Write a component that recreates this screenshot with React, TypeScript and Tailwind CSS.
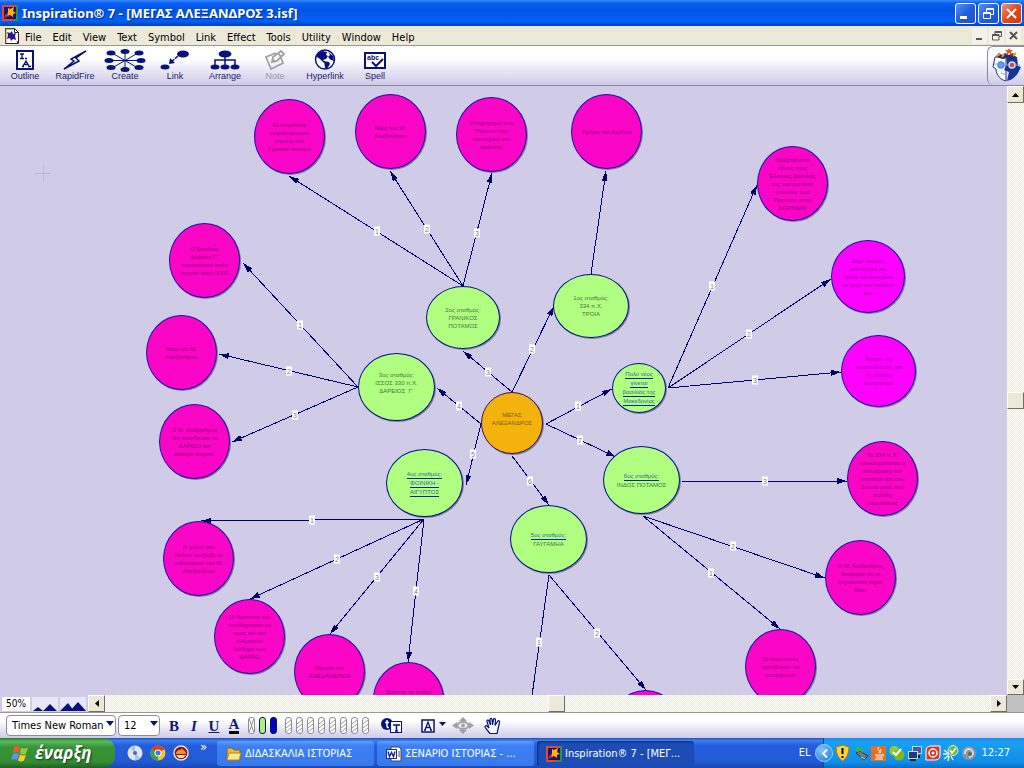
import { useState } from 'react'

const UI = "font-['DejaVu_Sans_Condensed','DejaVu_Sans','Noto_Sans',sans-serif]"
const TRACK = 'bg-[repeating-conic-gradient(#fff_0_25%,#ece9d8_0_50%)] bg-[length:2px_2px]'
const RAISED = 'bg-[#ece9d8] border border-t-white border-l-white border-r-[#716f64] border-b-[#716f64] flex items-center justify-center shrink-0'

const menus = ['File', 'Edit', 'View', 'Text', 'Symbol', 'Link', 'Effect', 'Tools', 'Utility', 'Window', 'Help']

type Node = { x: number; y: number; w: number; h: number; kind: string; lines: string[]; links?: number }

const PINK = { w: 71, h: 75, kind: 'pink' }

// positions are relative to the top left of the diagram canvas
const nodes: Node[] = [
  { ...PINK, x: 254, y: 13, lines: ['Οι σατράπες', 'συγκέντρωσαν', 'στρατό στο', 'Γρανικό ποταμό'] },
  { ...PINK, x: 355, y: 8, lines: ['Νίκη του Μ.', 'Αλεξάνδρου'] },
  { ...PINK, x: 456, y: 11, lines: ['Υποχώρηση των', 'Περσών στο', 'εσωτερικό του', 'κράτους'] },
  { ...PINK, x: 571, y: 8, lines: ['Τίμησε τον Αχιλλέα'] },
  { ...PINK, x: 757, y: 60, lines: ['Ορίζεται από', 'όλους τους', 'Έλληνες βασιλιάς', 'της εκστρατείας', 'εναντίον των', 'Περσών, στην', 'ΚΟΡΙΝΘΟ'] },
  { x: 831, y: 154, w: 74, h: 73, kind: 'magenta', lines: ['Είχε πολλές', 'ικανότητες και', 'ήθελε να συνεχίσει', 'το έργο του πατέρα', 'του'] },
  { x: 841, y: 249, w: 75, h: 72, kind: 'magenta', lines: ['Άρχισε τις', 'προετοιμασίες για', 'τη μεγάλη', 'εκστρατεία'] },
  { ...PINK, x: 847, y: 355, lines: ['Το 334 π.Χ.', 'ολοκληρώνεται η', 'επιστροφή του', 'στρατού του στα', 'Σούσα μετά από', 'πολλές', 'περιπέτειες'] },
  { ...PINK, x: 825, y: 454, lines: ['Ο Μ. Αλέξανδρος', 'θεώρησε ότι οι', 'στρατιώτες είχαν', 'δίκιο'] },
  { ...PINK, x: 745, y: 543, lines: ['Οι στρατιώτες', 'αρνήθηκαν να', 'συνεχίσουν'] },
  { ...PINK, x: 610, y: 604, lines: [] },
  { ...PINK, x: 373, y: 576, lines: ['Διέλυσε το στόλο', '', ''] },
  { ...PINK, x: 294, y: 548, lines: ['Ίδρυσε την', 'ΑΛΕΞΑΝΔΡΕΙΑ'] },
  { ...PINK, x: 214, y: 513, lines: ['Οι Αιγύπτιοι τον', 'υποδέχτηκαν με', 'τιμές και τον', 'ονόμασαν', 'διάδοχο των', 'ΦΑΡΑΩ'] },
  { ...PINK, x: 163, y: 435, lines: ['Η χώρα του', 'Νείλου τράβηξε το', 'ενδιαφέρον του Μ.', 'Αλεξάνδρου'] },
  { ...PINK, x: 159, y: 318, lines: ['Ο Μ. Αλέξανδρος', 'δεν καταδιώκει το', 'ΔΑΡΕΙΟ και', 'αλλάζει πορεία.'] },
  { ...PINK, x: 146, y: 229, lines: ['Νίκη του Μ.', 'Αλεξάνδρου'] },
  { ...PINK, x: 169, y: 137, lines: ['Ο βασιλιάς', 'Δαρείος Γ΄', 'παρατάσσει πολύ', 'στρατό στην ΙΣΣΟ'] },
  { x: 426, y: 200, w: 74, h: 63, kind: 'green', lines: ['2ος σταθμός:', 'ΓΡΑΝΙΚΟΣ', 'ΠΟΤΑΜΟΣ'] },
  { x: 553, y: 188, w: 76, h: 64, kind: 'green', lines: ['1ος σταθμός:', '334 π.Χ.', 'ΤΡΟΙΑ'] },
  { x: 612, y: 277, w: 54, h: 50, kind: 'green', lines: ['Πολύ νέος', 'γίνεται', 'βασιλιάς της', 'Μακεδονίας'], links: 4 },
  { x: 603, y: 360, w: 77, h: 68, kind: 'green', lines: ['6ος σταθμός:', 'ΙΝΔΟΣ ΠΟΤΑΜΟΣ'], links: 1 },
  { x: 510, y: 419, w: 77, h: 68, kind: 'green', lines: ['5ος σταθμός:', 'ΓΑΥΓΑΜΗΑ'], links: 1 },
  { x: 386, y: 363, w: 77, h: 68, kind: 'green', lines: ['4ος σταθμός:', 'ΦΟΙΝΙΚΗ -', 'ΑΙΓΥΠΤΟΣ'], links: 3 },
  { x: 358, y: 267, w: 77, h: 68, kind: 'green', lines: ['3ος σταθμός:', 'ΙΣΣΟΣ 330 π.Χ.', 'ΔΑΡΕΙΟΣ  Γ΄', ''] },
  { x: 481, y: 306, w: 62, h: 62, kind: 'orange', lines: ['ΜΕΓΑΣ', 'ΑΛΕΞΑΝΔΡΟΣ', ''] },
]

// x1, y1, x2, y2, label, label x, label y
const edges: [number, number, number, number, string, number, number][] = [
  [512, 306, 463, 265, '3', 488, 286],
  [512, 306, 554, 220, '2', 532, 263],
  [546, 338, 612, 303, '1', 578, 320],
  [546, 338, 616, 371, '7', 580, 354],
  [512, 370, 549, 419, '6', 530, 395],
  [481, 338, 437, 302, '4', 459, 320],
  [481, 338, 466, 399, '5', 473, 368],
  [463, 200, 289, 90, '1', 377, 145],
  [463, 200, 390, 85, '2', 427, 143],
  [463, 200, 492, 87, '3', 477, 147],
  [591, 188, 606, 85, '', 0, 0],
  [668, 302, 757, 99, '1', 712, 200],
  [668, 302, 831, 193, '2', 749, 248],
  [668, 302, 841, 286, '3', 755, 294],
  [682, 395, 847, 395, '3', 765, 395],
  [643, 430, 825, 492, '2', 733, 460],
  [643, 430, 780, 543, '1', 711, 487],
  [549, 489, 530, 624, '1', 539, 556],
  [549, 489, 646, 604, '2', 597, 547],
  [424, 433, 201, 435, '1', 312, 434],
  [424, 433, 250, 513, '2', 337, 473],
  [424, 433, 330, 548, '3', 377, 491],
  [424, 433, 408, 576, '4', 416, 505],
  [358, 301, 243, 177, '1', 300, 239],
  [358, 301, 219, 268, '2', 289, 285],
  [358, 301, 232, 356, '3', 295, 329],
]

const fills: Record<string, string> = {
  pink: 'bg-[#fb05c6] border-[#1c10a8] text-[#96057c]',
  magenta: 'bg-[#ff00ff] border-[#1c10a8] text-[#98109c]',
  green: 'bg-[#b0ff80] border-[#00108c] text-[#4a7440]',
  orange: 'bg-[#f3b20c] border-[#3c0a70] text-[#7a5c10]',
}

function Bubble({ node }: { node: Node }) {
  return (
    <div
      className={`absolute flex flex-col items-center justify-center rounded-[50%] border shadow-[1px_1px_0_#7c7a9c] text-[6px] leading-[8px] whitespace-pre font-['Liberation_Sans','Noto_Sans',sans-serif] ${fills[node.kind]}`}
      style={{ left: node.x, top: node.y, width: node.w, height: node.h }}
    >
      {node.lines.map((line, i) =>
        i < (node.links || 0) ? (
          <a key={i} href="#" className="text-[#2f6c9c] border-b border-[#0a2a9c]">{line}</a>
        ) : (
          <span key={i} className="min-h-[8px]">{line}</span>
        )
      )}
    </div>
  )
}

function Diagram() {
  return (
    <main className="relative flex-1 min-w-0 overflow-hidden bg-[#d0cce8]">
      <svg className="absolute inset-0 w-full h-full" shapeRendering="crispEdges">
        <defs>
          <marker id="head" markerWidth="11" markerHeight="6" refX="10" refY="3" orient="auto" markerUnits="userSpaceOnUse">
            <path d="M0 0L10 3L0 6z" fill="#000060" />
          </marker>
        </defs>
        <path d="M43 79v16M35 87h16" stroke="#bab8d0" />
        {edges.map((e, i) => (
          <line key={i} x1={e[0]} y1={e[1]} x2={e[2]} y2={e[3]} stroke="#000070" markerEnd="url(#head)" />
        ))}
      </svg>
      {edges.filter(e => e[4]).map((e, i) => (
        <span
          key={i}
          className="absolute w-[6px] h-[9px] -translate-x-1/2 -translate-y-1/2 bg-white text-center text-[7px] leading-[9px] text-[#808080] font-['Liberation_Sans',sans-serif]"
          style={{ left: e[5], top: e[6] }}
        >
          {e[4]}
        </span>
      ))}
      {nodes.map((n, i) => <Bubble key={i} node={n} />)}
    </main>
  )
}

function AppIcon() {
  return (
    <svg width="16" height="16" viewBox="0 0 16 16" className="shrink-0">
      <rect width="16" height="16" fill="#e8472c" />
      <path d="M14 0h2v16h-6z" fill="#2f8f4a" />
      <rect x="2" y="2" width="12" height="12" fill="#1c1070" />
      <path d="M6 3l2 1 4-2-1 4 3 2-3 1v3l-3-2-3 1 1-4z" fill="#ffb400" />
      <path d="M3 13c0-3 1-4 3-4M4 11h3" stroke="#e8472c" fill="none" />
    </svg>
  )
}

function Arrow({ dir }: { dir: 'up' | 'down' | 'left' | 'right' }) {
  const d = { up: 'M0 4h7L3.500 0z', down: 'M0 0h7L3.500 4z', left: 'M4 0v7L0 3.500z', right: 'M0 0v7l4-3.500z' }[dir]
  const tall = dir === 'left' || dir === 'right'
  return <svg width={tall ? 4 : 7} height={tall ? 7 : 4}><path d={d} fill="#000" /></svg>
}

function TitleBar() {
  const btn = 'w-[21px] h-[21px] rounded-[3px] border border-white flex items-center justify-center'
  const blue = 'bg-[linear-gradient(135deg,#5b8ff5,#2160e0_50%,#1a4fd0)]'
  return (
    <header className="h-[26px] shrink-0 flex items-center pl-[2px] pr-[2px] gap-1 bg-[linear-gradient(#3a8cff,#0a5ff2_12%,#0054e3_40%,#0060fa_80%,#0040c0)]">
      <AppIcon />
      <h1 className="flex-1 text-white text-[13px] leading-[20px] font-bold font-['Noto_Sans',sans-serif] [text-shadow:1px_1px_1px_#0a2a80] whitespace-nowrap">Inspiration® 7 - [ΜΕΓΑΣ ΑΛΕΞΑΝΔΡΟΣ 3.isf]</h1>
      <div className="flex gap-[2px]">
        <button aria-label="Minimize" className={`${btn} ${blue}`}>
          <svg width="13" height="13"><path d="M1 9h7v3H1z" fill="#fff" /></svg>
        </button>
        <button aria-label="Restore" className={`${btn} ${blue}`}>
          <svg width="13" height="13" fill="none" stroke="#fff"><path d="M4.500 5V1.500h7v6H9M4 2.500h8" /><path d="M1.500 5.500h7v6h-7zM1 6.500h8" /></svg>
        </button>
        <button aria-label="Close" className={`${btn} bg-[linear-gradient(135deg,#f0957a,#e04a20_50%,#c83c14)]`}>
          <svg width="13" height="13"><path d="M2 2l9 9M11 2l-9 9" stroke="#fff" strokeWidth="2" /></svg>
        </button>
      </div>
    </header>
  )
}

function MenuBar() {
  const btn = 'w-[15px] h-[16px] bg-[#f3f1e8] flex items-center justify-center'
  return (
    <nav className="h-5 shrink-0 flex items-center pl-[5px] pr-[3px] bg-[#ece9d8] border-b border-[#9c9a8c]">
      <svg width="14" height="16" viewBox="0 0 14 16">
        <path d="M.5.5h9l4 4v11H.5z" fill="#fff" stroke="#222" />
        <path d="M1 1v14" stroke="#d07a20" /><path d="M1 1h8" stroke="#2f9a4a" />
        <path d="M9.500.5v4h4M12 13l1 2" stroke="#222" fill="none" />
        <path d="M7 3l1 3 3-1-1 3 1 4-3-1-2 2-1-3-3 1 1-4-1-3 3 1z" fill="#2a1590" />
      </svg>
      <ul className="flex flex-1">
        {menus.map(m => (
          <li key={m}><button className="pl-[6px] pr-[5px] text-[11px] leading-[16px] text-black">{m}</button></li>
        ))}
      </ul>
      <div className="flex gap-[2px]">
        <button aria-label="Minimize document" className={btn}><svg width="9" height="9"><path d="M1 7h6v2H1z" fill="#555" /></svg></button>
        <button aria-label="Restore document" className={btn}>
          <svg width="10" height="10" fill="none" stroke="#555"><path d="M3 3V.5h6.500v5H7M3 1.500h6M.5 3.500H7v5.500H.5zM.5 4.500H7" /></svg>
        </button>
        <button aria-label="Close document" className={btn}><svg width="9" height="9"><path d="M1 1l7 7M8 1L1 8" stroke="#555" strokeWidth="2" /></svg></button>
      </div>
    </nav>
  )
}

const navy = '#08107c'

const tools = [
  {
    label: 'Outline',
    icon: (
      <svg width="18" height="20" viewBox="0 0 18 20" fill="none" stroke={navy}>
        <rect x="1" y="1" width="16" height="18" strokeWidth="2" fill="#fff" />
        <path d="M4 4h4M6 4v5M4 8.500h4M9 8.500h2" strokeWidth="1.300" />
        <path d="M7 16l3-5 3 5M8 14.500h4M6 16.500h2M12 16.500h3" strokeWidth="1.300" />
      </svg>
    ),
  },
  {
    label: 'RapidFire',
    icon: (
      <svg width="26" height="20" viewBox="0 0 26 20">
        <path d="M24 1L9 9l3 2L2 19l15-8-3-3z" fill="#fff" stroke={navy} strokeWidth="1.500" />
      </svg>
    ),
  },
  {
    label: 'Create',
    icon: (
      <svg width="42" height="23" viewBox="0 0 42 23" className="shrink-0">
        <path d="M21 3v17M5 11.500h32M8 4l26 15M34 4L8 19" stroke={navy} />
        <g fill={navy}>
          <ellipse cx="21" cy="2.500" rx="4.500" ry="2.500" /><ellipse cx="21" cy="20.500" rx="4.500" ry="2.500" />
          <ellipse cx="5" cy="11.500" rx="4.500" ry="2.500" /><ellipse cx="37" cy="11.500" rx="4.500" ry="2.500" />
          <ellipse cx="7" cy="4" rx="4.500" ry="2.500" /><ellipse cx="35" cy="4" rx="4.500" ry="2.500" />
          <ellipse cx="7" cy="18.500" rx="4.500" ry="2.500" /><ellipse cx="35" cy="18.500" rx="4.500" ry="2.500" />
        </g>
      </svg>
    ),
  },
  {
    label: 'Link',
    icon: (
      <svg width="30" height="20" viewBox="0 0 30 20" fill={navy}>
        <ellipse cx="23" cy="4" rx="6" ry="3.500" /><ellipse cx="5" cy="17" rx="4.500" ry="2.500" />
        <path d="M18 6l-7 6" stroke={navy} strokeWidth="1.500" strokeDasharray="4 1" /><path d="M9 14l1-6 5 5z" />
      </svg>
    ),
  },
  {
    label: 'Arrange',
    icon: (
      <svg width="30" height="20" viewBox="0 0 30 20" fill={navy}>
        <path d="M15 5v11M5 16v-6h20v6" stroke={navy} strokeWidth="1.500" fill="none" />
        <ellipse cx="15" cy="4" rx="6.500" ry="3.500" /><ellipse cx="5" cy="17" rx="4.500" ry="2.500" />
        <ellipse cx="15" cy="17" rx="4.500" ry="2.500" /><ellipse cx="25" cy="17" rx="4.500" ry="2.500" />
      </svg>
    ),
  },
  {
    label: 'Note',
    off: true,
    icon: (
      <svg width="22" height="20" viewBox="0 0 22 20" fill="none" stroke="#a0a0a4" strokeWidth="1.800">
        <path d="M12 3L2 7l5 12 12-6-2-5" /><path d="M8 12l1-5 8-6 3 3-7 7zM14 3l3 4M8 12l3-2" />
      </svg>
    ),
  },
  {
    label: 'Hyperlink',
    icon: (
      <svg width="22" height="22" viewBox="0 0 22 22">
        <circle cx="11" cy="10.500" r="9.500" fill="#fff" stroke={navy} strokeWidth="1.500" />
        <path d="M3 5l5-3 5 1-1 3 2 1-2 3-3 1 2 2-1 1-4-4-3-2zM14 3l5 4 1 5-3-1-3-3 2-2zM10 12l5 1 1 2-3 5-2-1z" fill={navy} />
      </svg>
    ),
  },
  {
    label: 'Spell',
    icon: (
      <svg width="22" height="17" viewBox="0 0 22 17">
        <rect x="1" y="1" width="20" height="15" fill="#fff" stroke={navy} strokeWidth="2" />
        <text x="3" y="8" fontSize="7" fontWeight="bold" fill={navy} fontFamily="Liberation Sans, sans-serif">abc</text>
        <path d="M8 10l4 4 7-7" stroke={navy} strokeWidth="2" fill="none" />
      </svg>
    ),
  },
]

function Toolbar() {
  return (
    <div className="h-10 shrink-0 flex justify-between bg-[linear-gradient(#fff_30%,#cfcae8)] border-b border-[#8c8aa0]">
      <div className="flex">
        {tools.map(t => (
          <button key={t.label} className={`w-[50px] pt-[3px] flex flex-col items-center text-[9px] leading-[10px] font-['Liberation_Sans',sans-serif] ${t.off ? 'text-[#9a98a8]' : 'text-[#20206c]'}`}>
            <span className="h-[22px] flex items-center">{t.icon}</span>
            {t.label}
          </button>
        ))}
      </div>
      <div className="w-[37px] border-l border-t border-[#8c8aa0] rounded-tl-md rounded-bl-md">
        <svg width="36" height="38" viewBox="0 0 36 38">
          <path d="M7 10L5 20l3 2c0 6 5 11 10 12V10z" fill="#fff" stroke="#1c2c98" />
          <path d="M18 9l11 1 1 9 3 1-2 4c-2 5-7 9-12 10l2-9-5-2 3-6z" fill="#16349c" />
          <path d="M8 9l3-3 3 2 3-2 4 2 4-2 3 4-6 2-3-1-4 1-4-1z" fill="#2a2c60" />
          <path d="M21 1l1 2h3l-2 2 1 3-3-2-3 2 1-3-2-2h3z" fill="#e8502c" />
          <path d="M9 9l3-2M14 10l2-3M25 9l3-3" stroke="#e8a020" strokeWidth="2" />
          <circle cx="13" cy="18" r="3" fill="#b078f0" stroke="#20a0d8" strokeWidth="1.500" />
          <circle cx="24" cy="18" r="3" fill="#c84c30" stroke="#dcd8f4" strokeWidth="1.500" />
          <path d="M17 18h3M6 17h3M28 18h4M13 26l6 2" stroke="#9c98c8" />
        </svg>
      </div>
    </div>
  )
}

function VScroll() {
  return (
    <div className={`w-[17px] shrink-0 flex flex-col ${TRACK}`}>
      <button aria-label="Scroll up" className={`h-[17px] ${RAISED}`}><Arrow dir="up" /></button>
      <div className="grow-[289]" />
      <div className={`h-[17px] ${RAISED}`} />
      <div className="grow-[270]" />
      <button aria-label="Scroll down" className={`h-[16px] ${RAISED}`}><Arrow dir="down" /></button>
    </div>
  )
}

function HScroll() {
  return (
    <div className="h-[18px] shrink-0 flex bg-[#d0cce8] border-b border-[#9c9a8c]">
      <div className="flex items-center gap-[2px] px-[2px]">
        <span className="w-[28px] h-[14px] bg-white pl-1 text-[10px] leading-[14px] whitespace-nowrap">50%</span>
        <button aria-label="Zoom out" className="w-[26px] h-[14px] bg-[#e8e6f4] flex items-end justify-center">
          <svg width="24" height="9" fill={navy}><path d="M0 9l5-4 5 4zM10 9l7-7 7 7z" /></svg>
        </button>
        <button aria-label="Zoom in" className="w-[26px] h-[14px] bg-[#e8e6f4] flex items-end justify-center">
          <svg width="26" height="10" fill={navy}><path d="M0 10l8-8 6 8zM10 10l8-9 8 9z" /></svg>
        </button>
      </div>
      <div className={`flex-1 flex ${TRACK}`}>
        <button aria-label="Scroll left" className={`w-[17px] ${RAISED}`}><Arrow dir="left" /></button>
        <div className="grow-[443]" />
        <div className={`w-[17px] ${RAISED}`} />
        <div className="grow-[425]" />
        <button aria-label="Scroll right" className={`w-[17px] ${RAISED}`}><Arrow dir="right" /></button>
      </div>
      <div className="w-[17px] bg-[#c0c0c0]" />
    </div>
  )
}

function Picker({ label, width, value, onChange, options }: { label: string; width: string; value: string; onChange: (v: string) => void; options: string[] }) {
  return (
    <div className={`relative flex ${width}`}>
      <select
        aria-label={label}
        value={value}
        onChange={e => onChange(e.target.value)}
        className="appearance-none w-full h-[21px] bg-white border border-[#8c8aa0] rounded-[4px] pl-[5px] pr-1 text-[11px] leading-[14px] text-black"
      >
        {options.map(o => <option key={o}>{o}</option>)}
      </select>
      <svg width="8" height="5" className="absolute right-[2px] top-[6px] pointer-events-none" fill={navy}><path d="M0 0h8L4 5z" /></svg>
    </div>
  )
}

function FormatBar() {
  const [font, setFont] = useState('Times New Roman')
  const [size, setSize] = useState('12')
  const serif = "w-5 h-5 flex items-center justify-center text-[15px] leading-[16px] font-bold text-[#10186c] font-['Liberation_Serif',serif]"
  const swatches = ['none', 'bg-[#a8f080]', 'bg-[#0000c8]']
  return (
    <div className="h-[25px] shrink-0 flex items-center pl-[6px] bg-[linear-gradient(#fff_30%,#cfcae8)]">
      <div className="flex gap-[2px]">
        <Picker label="Font" width="w-[110px]" value={font} onChange={setFont} options={['Times New Roman', 'Arial']} />
        <Picker label="Size" width="w-[42px]" value={size} onChange={setSize} options={['12', '14', '18']} />
      </div>
      <div className="flex items-center ml-[4px]">
        <button className={serif}>B</button>
        <button className={`${serif} italic`}>I</button>
        <button className={`${serif} underline`}>U</button>
        <button className={serif}><span className="border-b-[3px] border-black leading-[13px]">A</span></button>
      </div>
      <div className="flex gap-1 ml-[4px]">
        {swatches.map(s => (
          <button key={s} aria-label="Colour" className={`w-[7px] h-[17px] rounded-[3px] border overflow-hidden ${s === 'none' ? 'border-[#8c8c8c] bg-white' : 'border-[#10184c] ' + s}`}>
            {s === 'none' && <svg width="5" height="15"><path d="M0 0l5 15M5 0L0 15" stroke="#8c8c8c" /></svg>}
          </button>
        ))}
      </div>
      <div className="flex gap-1 ml-2">
        {Array.from({ length: 8 }, (_, i) => (
          <button key={i} aria-label={`Swatch ${i + 1}`} className="w-[7px] h-[17px] rounded-[3px] border border-[#8c8c8c] bg-white overflow-hidden">
            <svg width="5" height="15"><path d="M0 6l5-4M0 10l5-4M0 14l5-4" stroke="#9c9c9c" /></svg>
          </button>
        ))}
      </div>
      <button aria-label="Text style" className="ml-3">
        <svg width="22" height="17" viewBox="0 0 22 17">
          <circle cx="6" cy="7" r="6" fill={navy} />
          <path d="M6 3v6q0 2 2 1.500M4 5.500h4" stroke="#fff" strokeWidth="1.500" fill="none" />
          <rect x="9.500" y="4.500" width="11" height="11" fill="#fff" stroke={navy} />
          <path d="M12 8h7M15.500 8v6M14 14h3" stroke={navy} strokeWidth="1.500" />
        </svg>
      </button>
      <button aria-label="Text box" className="ml-[18px] flex gap-1">
        <svg width="14" height="14" viewBox="0 0 14 14">
          <rect x="1" y="1" width="12" height="12" fill="#fff" stroke={navy} strokeWidth="1.500" />
          <path d="M4 11l3-8 3 8M5 8.500h4M3 11h2M9 11h2" stroke={navy} strokeWidth="1.300" fill="none" />
        </svg>
        <svg width="7" height="14" fill={navy}><path d="M0 3h7l-3.500 4z" /></svg>
      </button>
      <button aria-label="Resize" className="ml-[6px]">
        <svg width="22" height="17" viewBox="0 0 22 17" fill="#a0a0a4">
          <path d="M11 0l4 4H7zM11 17l4-4H7zM0 8.500L5 5v7zM22 8.500L17 5v7z" />
          <ellipse cx="11" cy="8.500" rx="5.500" ry="3.500" fill="none" stroke="#a0a0a4" strokeWidth="2" /><circle cx="11" cy="8.500" r="2" />
        </svg>
      </button>
      <button aria-label="Pan" className="ml-[10px]">
        <svg width="17" height="18" viewBox="0 0 17 18">
          <path d="M6 16.500L1.500 11C0 9 2 8 3.500 9.500L5 11 3 4.500C2.500 3 4.500 2.500 5 4l1.500 4L6 2.500C6 1 8 1 8 2.500L8.500 8l1-5.500C10 1 11.500 1.500 11.500 3L11 8.500l2.500-4C14.500 3 16 4 15.500 5.500L14 12l-1 4.500z" fill="#fff" stroke={navy} strokeWidth="1.200" />
        </svg>
      </button>
    </div>
  )
}

function Folder() {
  return (
    <svg width="16" height="14" viewBox="0 0 16 14">
      <path d="M1 2l1-1h4l2 2h6v10H1z" fill="#e8b840" stroke="#8c6a10" />
      <path d="M3 6h12l-2 7H1z" fill="#ffe890" stroke="#b08a20" />
    </svg>
  )
}

function WordDoc() {
  return (
    <svg width="16" height="16" viewBox="0 0 16 16">
      <path d="M5 1h8l2 2v12H5z" fill="#fff" stroke="#445" />
      <path d="M12 6h2M12 8h2M12 10h2" stroke="#445" />
      <rect x=".5" y="3.500" width="10" height="9" fill="#fff" stroke="#1c2c88" />
      <path d="M2 5.500l1.500 5 2-4 2 4 1.500-5" stroke="#1c2c88" strokeWidth="1.500" fill="none" />
    </svg>
  )
}

const tasks = [
  { label: 'ΔΙΔΑΣΚΑΛΙΑ ΙΣΤΟΡΙΑΣ', icon: <Folder />, active: false },
  { label: 'ΣΕΝΑΡΙΟ ΙΣΤΟΡΙΑΣ - ...', icon: <WordDoc />, active: false },
  { label: 'Inspiration® 7 - [ΜΕΓ...', icon: <AppIcon />, active: true },
]

function QuickLaunch() {
  return (
    <div className="w-[102px] flex items-center gap-[7px] pl-3">
      <button aria-label="Media player">
        <svg width="16" height="16"><circle cx="8" cy="8" r="7.500" fill="#dfe6f4" /><path d="M8 8L3 3a7 7 0 0 1 5-2zM8 8l5 5a7 7 0 0 1-5 2z" fill="#a8c0ec" /><circle cx="8" cy="8" r="2" fill="#4c6cb0" /></svg>
      </button>
      <button aria-label="Chrome">
        <svg width="16" height="16" viewBox="0 0 16 16">
          <circle cx="8" cy="8" r="7.500" fill="#f4c820" />
          <path d="M8 8L1.500 4.300A7.500 7.500 0 0 1 14.500 4.300z" fill="#e03c28" />
          <path d="M8 8L1.500 4.300A7.500 7.500 0 0 0 8 15.500z" fill="#38a048" />
          <circle cx="8" cy="8" r="3.500" fill="#fff" /><circle cx="8" cy="8" r="2.500" fill="#3c7ce0" />
        </svg>
      </button>
      <button aria-label="Burner">
        <svg width="16" height="16"><circle cx="8" cy="8" r="7" fill="#781810" stroke="#e8dcd0" strokeWidth="1.500" /><path d="M3 9c0-4 2-2 3-5 1 2 2 1 3-1 1 3 4 2 4 6z" fill="#ff8c20" /><path d="M3 10h10l-3 3H6z" fill="#f4e0b0" /></svg>
      </button>
      <span className="self-start pt-[2px] pl-[4px] text-[13px] leading-[14px] text-white">»</span>
    </div>
  )
}

function Tray() {
  return (
    <div className="relative flex items-center pl-[11px] pr-[14px] gap-[2px] bg-[linear-gradient(#1c8cec,#18a0f4_15%,#0f8ee8_80%,#0c6cc4)] border-l border-[#0a4a9c]">
      <button aria-label="Show hidden icons" className="absolute -left-[9px] top-[6px] w-[18px] h-[18px] rounded-full bg-[radial-gradient(circle_at_35%_30%,#7cc4ff,#1c74e0)] border border-[#a0ccf8] flex items-center justify-center">
        <svg width="7" height="9"><path d="M6 0.500L2 4.500l4 4" stroke="#fff" strokeWidth="2" fill="none" /></svg>
      </button>
      <svg width="16" height="16"><path d="M7.500 0L14 2q0 10-6.500 14Q1 12 1 2z" fill="#ffd430" stroke="#a07810" /><path d="M7.500 3v6M7.500 11v2" stroke="#000" strokeWidth="2" /></svg>
      <svg width="16" height="16"><path d="M3 8l4-2 8 5-4 4z" fill="#707884" stroke="#333" /><path d="M2 5l4-4v2c3 0 4 2 4 5C8 6 7 6 6 6v2z" fill="#3cb830" /><path d="M8 12l4 2" stroke="#9cf08c" /></svg>
      <svg width="16" height="16"><rect width="15" height="15" y="1" fill="#e87020" /><path d="M8 2c-3 3 2 3 0 6M10 4c-2 2 1 2-1 4M4 10h7M5 12h6M4 14h8M11 9q3 0 0 3" stroke="#fff" fill="none" /></svg>
      <svg width="16" height="16"><circle cx="5.500" cy="6" r="5" fill="#98cc28" /><circle cx="10" cy="10" r="5.500" fill="#7cb820" /><path d="M4 7l3 3 5-6" stroke="#fff" strokeWidth="2" fill="none" /></svg>
      <svg width="16" height="16"><rect x="5.500" y="1.500" width="9" height="7" fill="#3c5ca8" stroke="#c8d4ec" /><rect x="1.500" y="6.500" width="9" height="7" fill="#20387c" stroke="#c8d4ec" /><path d="M3 15h6M12 10v3" stroke="#222" strokeWidth="2" /></svg>
      <svg width="16" height="16"><path d="M6 1h9v9q0 5-5 5H1V6q0-5 5-5z" fill="#e03424" stroke="#fff" /><circle cx="8" cy="8" r="4" fill="none" stroke="#fff" strokeWidth="1.500" /><circle cx="8" cy="8" r="1.500" fill="#fff" /></svg>
      <svg width="16" height="16"><path d="M1 5l5 4M1 14l5-4M5 16l1-5M10 15l-2-4M0 9h5" stroke="#e4ecf4" strokeWidth="1.500" /><circle cx="10" cy="5.500" r="5" fill="#70b848" stroke="#e0e8d8" /><path d="M7 5l2 3 4-5" stroke="#fff" strokeWidth="1.500" fill="none" /></svg>
      <svg width="16" height="16"><circle cx="8" cy="8" r="7" fill="#8c949c" /><path d="M4 9a4 4 0 1 1 4 3" stroke="#d8dce0" strokeWidth="2" fill="none" /><circle cx="9" cy="9" r="2" fill="#5c646c" /></svg>
      <time className="ml-[2px] text-[11px] leading-[14px] text-white">12:27</time>
    </div>
  )
}

function Taskbar() {
  return (
    <footer className="h-[30px] shrink-0 flex bg-[linear-gradient(#1c50b8,#3c80f0_8%,#245edc_25%,#2258d4_80%,#1a48b0)]">
      <button className="w-[115px] flex items-center pl-[11px] gap-[6px] rounded-r-xl bg-[linear-gradient(#2c7c2c,#5cb85c_12%,#389438_30%,#348c34_80%,#206020)]">
        <svg width="18" height="17" viewBox="0 0 18 17">
          <path d="M3 2q3-2 6 0L8 8Q5 6 2 8z" fill="#f05c28" /><path d="M10 2.500q3 2 7 0l-2 6q-3 2-6 0z" fill="#8cd040" />
          <path d="M2 9q3-2 6 0l-2 6q-3-2-6 0z" fill="#5c94f4" /><path d="M9 9.500q3 2 6 0l-2 6q-3 2-6 0z" fill="#ffcc30" />
        </svg>
        <span className="text-[17px] leading-[22px] italic font-bold text-white font-['Open_Sans','Noto_Sans',sans-serif] [text-shadow:1px_1px_2px_#103c10]">έναρξη</span>
      </button>
      <QuickLaunch />
      <div className="flex flex-1 min-w-0 gap-[3px] pt-[3px] pb-[2px]">
        {tasks.map(t => (
          <button
            key={t.label}
            className={`w-[157px] flex items-center gap-[3px] pl-[9px] rounded-[3px] text-[11px] leading-[14px] text-white whitespace-nowrap overflow-hidden ${t.active ? 'bg-[#1c4cb4] shadow-[inset_1px_1px_2px_#0c2c7c]' : 'bg-[linear-gradient(#5c9cfc,#3c80f4_20%,#3878ec)]'}`}
          >
            {t.icon}
            {t.label}
          </button>
        ))}
      </div>
      <button className="mr-[13px] text-[11px] leading-[14px] text-white">EL</button>
      <Tray />
    </footer>
  )
}

export default function App() {
  return (
    <div className={`h-screen flex flex-col overflow-hidden bg-[#d0cce8] ${UI}`}>
      <TitleBar />
      <MenuBar />
      <Toolbar />
      <div className="flex flex-1 min-h-0">
        <Diagram />
        <VScroll />
      </div>
      <HScroll />
      <FormatBar />
      <Taskbar />
    </div>
  )
}
